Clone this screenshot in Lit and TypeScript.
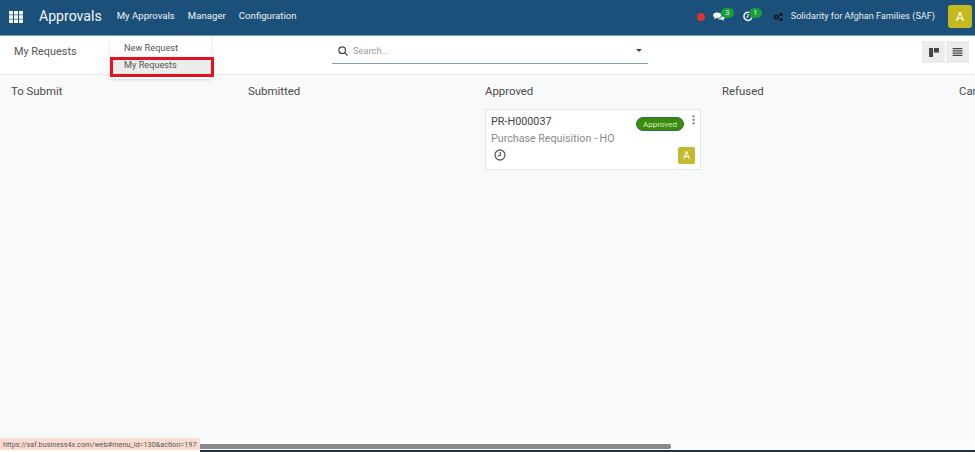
import { LitElement, html, css } from "lit";
import { customElement } from "lit/decorators.js";

@customElement("app-root")
export class AppRoot extends LitElement {
  static styles = css`
    :host { display: block; width: 975px; height: 452px; position: relative; overflow: hidden; font-family: Roboto, "Liberation Sans", sans-serif; color: #4c4c4c; background: #f8f9fa; }
    .page { display: flex; flex-direction: column; height: 452px; }
    .nav { height: 36px; flex: none; background: #1a5079; color: #f2f6f9; display: flex; align-items: center; padding: 0 3px 1px 9px; box-sizing: border-box; border-bottom: 1px solid #7e9fb8; }
    .apps { width: 14px; height: 12px; margin-right: 16px; display: block; margin-top: -1px; }
    .brand { font-size: 14.1px; margin-right: 15px; margin-top: -2px; }
    .menu { font-size: 9.65px; margin-right: 13px; margin-top: -3px; letter-spacing: 0; color: #eef3f7; }
    .spacer { flex: 1; }
    .dot { width: 8px; height: 8px; border-radius: 50%; background: #e0322f; margin-right: 8px; margin-top: -1px; }
    .iconwrap { position: relative; display: flex; align-items: center; margin-top: -1px; }
    .chat { margin-right: 18px; }
    .clock { margin-right: 20px; }
    .badge { position: absolute; background: #1b9c3c; color: #d9f2df; border-radius: 6px; font-size: 8px; height: 10px; line-height: 10px; text-align: center; width: 13px; top: -3px; }
    .chat .badge { left: 8px; }
    .clock .badge { left: 6px; }
    .gear { margin-right: 8px; margin-top: -1px; }
    .company { font-size: 9.15px; margin-right: 13px; margin-top: -3px; color: #e6edf2; }
    .avatar { width: 24px; height: 23px; border-radius: 3px; background: #c4b91d; color: #fff; font-size: 13px; display: flex; align-items: center; justify-content: center; margin-top: -1px; }
    .control { height: 39px; flex: none; background: #fff; border-bottom: 1px solid #e9ebee; display: grid; grid-template-columns: 332px 316px 1fr; align-items: start; box-sizing: border-box; }
    .crumb { font-size: 10.9px; line-height: 13px; color: #555; padding: 9px 0 0 14px; }
    .search { height: 28px; border-bottom: 1px solid #7e9fb8; display: flex; align-items: center; padding: 2px 6px 0 6px; gap: 5px; box-sizing: border-box; }
    .search span { flex: 1; font-size: 9.3px; color: #9a9a9a; }
    .caret { width: 0; height: 0; border-left: 3.5px solid transparent; border-right: 3.5px solid transparent; border-top: 3.5px solid #3d4a5c; }
    .views { display: flex; justify-content: flex-end; gap: 1px; padding-right: 6px; padding-top: 5px; }
    .views div { width: 23px; height: 22px; background: #ececec; display: flex; align-items: center; justify-content: center; }
    .board { flex: 1; display: grid; grid-template-columns: repeat(5, 237px); padding-left: 11px; overflow: hidden; min-height: 0; }
    .col { min-width: 0; }
    .title { font-size: 11.4px; color: #4a4a4a; line-height: 13px; padding-top: 10px; white-space: nowrap; }
    .card { width: 216px; height: 61px; box-sizing: border-box; margin-top: 11px; background: #fff; border: 1px solid #e4e6e8; position: relative; padding: 5px 5px; display: flex; flex-direction: column; }
    .ref { font-size: 10.8px; color: #444; line-height: 14px; }
    .sub { font-size: 10.7px; color: #8a8a8a; line-height: 14px; margin-top: 3px; }
    .foot { display: flex; justify-content: space-between; align-items: flex-start; margin-top: 1px; }
    .foot svg { margin-left: 3px; margin-top: 2px; }
    .ca { width: 17px; height: 17px; background: #c4b92f; color: #fff; border-radius: 2px; font-size: 10px; display: flex; align-items: center; justify-content: center; }
    .pill { position: absolute; left: 150px; top: 7px; width: 48px; height: 14px; border-radius: 7px; background: #3c8c0c; color: #d5edc6; font-size: 8px; line-height: 13px; text-align: center; border: 0.5px solid #2e6a4c; box-sizing: border-box; }
    .kebab { position: absolute; right: 5px; top: 5px; }
    .scroll { height: 14px; flex: none; background: #fbfcfc; display: flex; align-items: flex-start; padding-top: 6px; box-sizing: border-box; border-bottom: 2px solid #1c3344; }
    .thumb { margin-left: 200px; width: 471px; height: 5px; background: #8a8a8a; border-radius: 0 2px 2px 0; }
    .dropdown { position: absolute; left: 110px; top: 36px; width: 101px; height: 43px; box-sizing: border-box; background: #fff; box-shadow: 0 1px 3px rgba(0,0,0,.15); font-size: 9.2px; color: #555; padding-top: 4px; }
    .dropdown div { height: 18px; line-height: 16px; padding-left: 14px; }
    .active { background: #ececec; position: relative; height: 17px !important; margin-top: -1px; }
    .mark { position: absolute; left: 110px; top: 57px; width: 104px; height: 20px; box-sizing: border-box; border: 3px solid #e8101f; }
    .status { position: absolute; left: 0; top: 438px; width: 200px; height: 12px; box-shadow: 0 2px 0 #fbfcfc; background: #fcdcd2; color: #555; font-size: 7.25px; line-height: 13px; padding-left: 3px; box-sizing: border-box; border-radius: 0 3px 0 0; white-space: nowrap; }
  `;

  render() {
    return html`
      <div class="page">
        <div class="nav">
          <svg class="apps" viewBox="0 0 14 12" fill="#fff">
            <path d="M0 0h4v3.4H0zM5 0h4v3.4H5zM10 0h4v3.4h-4zM0 4.3h4v3.4H0zM5 4.3h4v3.4H5zM10 4.3h4v3.4h-4zM0 8.6h4V12H0zM5 8.6h4V12H5zM10 8.6h4V12h-4z"/>
          </svg>
          <span class="brand">Approvals</span>
          <span class="menu">My Approvals</span>
          <span class="menu">Manager</span>
          <span class="menu">Configuration</span>
          <div class="spacer"></div>
          <div class="dot"></div>
          <div class="iconwrap chat">
            <svg width="12" height="11" viewBox="0 0 13 12" fill="#f3f6f8"><path d="M0 4.500C0 2.500 2 1.500 4.500 1.500S9 2.500 9 4.500 7 7.500 4.500 7.500H3.600L1.400 9l.4-2C.7 6.500 0 5.600 0 4.500z"/><path d="M10 4.200c1.700.3 3 1.300 3 2.600 0 1-.7 1.800-1.600 2.200l.4 2-2.400-1.600H8C6.600 9.400 5.500 9 5 8.300c3 .2 5.300-1.400 5-4.100z"/></svg>
            <span class="badge">3</span>
          </div>
          <div class="iconwrap clock">
            <svg width="10" height="11" viewBox="0 0 11 11" fill="none" stroke="#f3f6f8" stroke-width="1.600"><path d="M7.500 1.300A4.500 4.500 0 1 0 9.900 6.400"/><path d="M5.500 2.800V5.700L3.500 6.700" stroke-width="1.200"/></svg>
            <span class="badge">1</span>
          </div>
          <svg class="gear" width="10" height="10" viewBox="0 0 10 10" fill="#0a1722"><circle cx="3.400" cy="5" r="2.600"/><circle cx="8" cy="2.400" r="1.700"/><circle cx="8" cy="7.600" r="1.700"/><circle cx="3.400" cy="5" r=".9" fill="#1a5079"/></svg>
          <span class="company">Solidarity for Afghan Families (SAF)</span>
          <div class="avatar">A</div>
        </div>
        <div class="control">
          <div class="crumb">My Requests</div>
          <div class="search">
            <svg width="10" height="10" viewBox="0 0 10 10" fill="none" stroke="#444" stroke-width="1.200"><circle cx="4.200" cy="4.200" r="3.300"/><path d="M6.700 6.700L9.500 9.500"/></svg>
            <span>Search...</span>
            <div class="caret"></div>
          </div>
          <div class="views">
            <div><svg width="10" height="9" viewBox="0 0 11 10" fill="#444"><path d="M0 0h4.500v10H0zM5.500 0H11v5H5.500z"/></svg></div>
            <div><svg width="11" height="8" viewBox="0 0 11 9" fill="#444"><path d="M0 0h11v1.500H0zM0 2.500h11V4H0zM0 5h11v1.500H0zM0 7.500h11V9H0z"/></svg></div>
          </div>
        </div>
        <div class="board">
          <div class="col"><div class="title">To Submit</div></div>
          <div class="col"><div class="title">Submitted</div></div>
          <div class="col">
            <div class="title">Approved</div>
            <div class="card">
              <div class="ref">PR-H000037</div>
              <div class="sub">Purchase Requisition - HO</div>
              <div class="foot">
                <svg width="12" height="12" viewBox="0 0 12 12" fill="none" stroke="#5a5f67" stroke-width="1.300"><circle cx="6" cy="6" r="5"/><path d="M6.300 3v3.300L3.800 7"/></svg>
                <div class="ca">A</div>
              </div>
              <div class="pill">Approved</div>
              <svg class="kebab" width="3" height="10" viewBox="0 0 3 10" fill="#777"><circle cx="1.500" cy="1.300" r="1.100"/><circle cx="1.500" cy="4.800" r="1.100"/><circle cx="1.500" cy="8.300" r="1.100"/></svg>
            </div>
          </div>
          <div class="col"><div class="title">Refused</div></div>
          <div class="col"><div class="title">Cancelled</div></div>
        </div>
        <div class="scroll"><div class="thumb"></div></div>
      </div>
      <div class="dropdown">
        <div>New Request</div>
        <div class="active">My Requests</div>
      </div>
      <div class="mark"></div>
      <div class="status">https://saf.business4x.com/web#menu_id=130&amp;action=197</div>
    `;
  }
}
